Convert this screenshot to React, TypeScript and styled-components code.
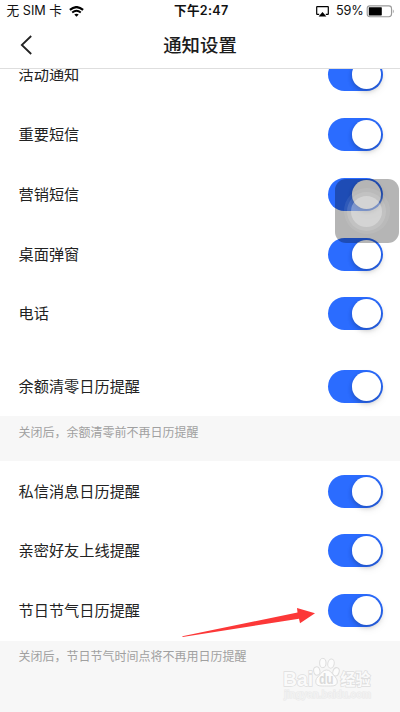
import React from "react";
import styled, { createGlobalStyle } from "styled-components";

const GlobalStyle = createGlobalStyle`
  * { box-sizing: border-box; }
  html, body { margin: 0; padding: 0; background: #fff; overflow: hidden; }
  body { font-family: Inter, "Noto Sans CJK SC", sans-serif; color: #222; }
`;

const Screen = styled.div`
  position: relative;
  display: flex;
  flex-direction: column;
  width: 400px;
  height: 712px;
  overflow: hidden;
  background: #fff;
`;

const StatusBar = styled.header`
  display: grid;
  grid-template-columns: 1fr auto 1fr;
  align-items: center;
  flex: none;
  height: 22px;
  padding: 0 5px 0 6.5px;
  font-size: 12.7px;
  line-height: 22px;
  color: #111;
  white-space: nowrap;
`;

const StatusGroup = styled.div<{ $end?: boolean }>`
  display: flex;
  align-items: center;
  justify-content: ${(p) => (p.$end ? "flex-end" : "flex-start")};
  gap: ${(p) => (p.$end ? "0" : "7px")};
  svg { flex: none; }
`;

const Clock = styled.div`
  padding-left: 1px;
  font-weight: 600;
  font-size: 12.6px;
  letter-spacing: 0.3px;
`;

const Battery = styled.span`
  margin: 0 2.5px 0 7px;
  letter-spacing: -0.2px;
`;

const NavBar = styled.nav`
  display: grid;
  grid-template-columns: 60px 1fr 60px;
  align-items: center;
  flex: none;
  height: 47px;
  border-bottom: 1px solid #dedede;
`;

const BackButton = styled.button`
  display: flex;
  padding: 0 0 0 20px;
  border: 0;
  background: none;
`;

const Title = styled.h1`
  margin: 0;
  padding-bottom: 2px;
  text-align: center;
  font: 500 18.4px/44px "Noto Sans CJK SC", sans-serif;
  color: #1c1c1c;
`;

const Content = styled.main`
  flex: 1;
  min-height: 0;
  overflow: hidden;
  background: #f7f7f7;
`;

const Section = styled.section<{ $scrolled?: boolean; $spaced?: boolean }>`
  margin-top: ${(p) => (p.$scrolled ? "-24.1px" : "0")};
  padding-top: ${(p) => (p.$spaced ? "12.6px" : "0")};
  background: #fff;
`;

const Row = styled.div`
  display: flex;
  align-items: center;
  justify-content: space-between;
  height: 59.8px;
  padding: 0 17px 0 18.5px;
`;

const Label = styled.span`
  padding-bottom: 3px;
  font: 400 15.2px/24px "Noto Sans CJK SC", sans-serif;
  color: #222;
`;

const Switch = styled.span`
  display: flex;
  align-items: center;
  justify-content: flex-end;
  width: 55px;
  height: 33px;
  padding-right: 2px;
  border-radius: 17px;
  background: #2b6cff;
`;

const Knob = styled.span`
  width: 29.4px;
  height: 29px;
  border-radius: 50%;
  background: #fff;
  box-shadow: 0 2px 5px rgba(0, 0, 0, 0.22), 2px 4px 9px rgba(0, 0, 0, 0.06);
`;

const Hint = styled.p`
  height: 45px;
  margin: 0;
  padding: 6.5px 18.5px;
  font: 400 12px/18px "Noto Sans CJK SC", sans-serif;
  color: #a0a0a0;
`;

const AssistiveTouch = styled.div`
  position: absolute;
  left: 334.5px;
  top: 179px;
  display: grid;
  place-items: center;
  width: 64.5px;
  height: 64px;
  border-radius: 11px;
  background: rgba(0, 0, 0, 0.29);
`;

const TouchRing = styled.span<{ $size: number; $alpha: number }>`
  display: grid;
  place-items: center;
  width: ${(p) => p.$size}px;
  height: ${(p) => p.$size}px;
  border-radius: 50%;
  background: rgba(255, 255, 255, ${(p) => p.$alpha});
`;

const Arrow = styled.svg`
  position: absolute;
  left: 180px;
  top: 604px;
`;

const Watermark = styled.svg`
  position: absolute;
  left: 280px;
  top: 654px;
`;

const WifiIcon = () => (
  <svg width="15" height="11" viewBox="0 0 15 11" fill="none" stroke="#000">
    <path d="M.9 3.9Q7.5-1.8 14.1 3.9" strokeWidth="2.1" />
    <path d="M3.2 6.5Q7.5 3 11.8 6.5" strokeWidth="1.9" />
    <path d="M5.3 8.5Q7.5 6.8 9.7 8.5L7.5 10.8Z" fill="#000" stroke="none" />
  </svg>
);

const AirplayIcon = () => (
  <svg width="13" height="11" viewBox="0 0 13 11">
    <path d="M3.2 8.4H1.1Q.7 8.4.7 8V1.1Q.7.7 1.1.7H11.9Q12.3.7 12.3 1.1V8Q12.3 8.4 11.9 8.4H9.8" fill="none" stroke="#000" strokeWidth="1.2" />
    <path d="M6.5 5.9 10.4 10.4H2.6Z" fill="#000" />
  </svg>
);

const BatteryIcon = () => (
  <svg width="29" height="13" viewBox="0 0 29 13">
    <rect x="1.2" y=".9" width="24.3" height="10.8" rx="2.6" fill="#fff" stroke="#999" strokeWidth="1.1" />
    <rect x="2.8" y="2.2" width="13" height="8.2" rx=".6" fill="#000" />
    <path d="M26.8 4.2Q28.7 6.3 26.8 8.4Z" fill="#999" />
  </svg>
);

const SwitchRow = ({ label }: { label: string }) => (
  <Row>
    <Label>{label}</Label>
    <Switch role="switch" aria-checked="true" aria-label={label}>
      <Knob />
    </Switch>
  </Row>
);

const BaiduMark = () => (
  <Watermark width="98" height="50" viewBox="0 0 98 50">
    <g fill="#fcfcfc" stroke="#dedede" strokeWidth="1">
      <ellipse cx="36.8" cy="17" rx="3.1" ry="4.2" transform="rotate(-12 36.8 17)" />
      <ellipse cx="42.8" cy="9" rx="3.2" ry="4.6" />
      <ellipse cx="51" cy="9.6" rx="3.2" ry="4.6" transform="rotate(10 51 9.6)" />
      <ellipse cx="56" cy="17.8" rx="3.1" ry="4.2" transform="rotate(18 56 17.8)" />
      <path d="M46.5 16C43 16 41.5 19 39.4 21.2C37 23.8 35.4 25 35.8 28.3C36.2 32.5 41 32 46.3 32C51.8 32 57 32.6 57.3 28C57.5 25 55.3 23 53.5 21C51.2 18.3 49.8 16 46.5 16Z" />
    </g>
    <g fontFamily='"Liberation Sans", "Noto Sans CJK SC", sans-serif' fontWeight="700" fill="#fafafa" stroke="#dedede" strokeWidth="1.5" paintOrder="stroke">
      <text x="3" y="31.5" fontSize="20" textLength="30" lengthAdjust="spacingAndGlyphs">Bai</text>
      <text x="39" y="30" fontSize="14" fill="#dadada" stroke="none" textLength="14.5" lengthAdjust="spacingAndGlyphs">du</text>
      <text x="60.5" y="31" fontSize="15.5" textLength="30" lengthAdjust="spacingAndGlyphs">经验</text>
      <text x="4" y="43.5" fontSize="10.2" fill="#f2f2f2" stroke="#e9e9e9" strokeWidth="1" textLength="87" lengthAdjust="spacingAndGlyphs">jingyan.baidu.com</text>
    </g>
  </Watermark>
);

export default function App() {
  return (
    <Screen>
      <GlobalStyle />
      <StatusBar>
        <StatusGroup>
          <span>无 SIM 卡</span>
          <WifiIcon />
        </StatusGroup>
        <Clock>下午2:47</Clock>
        <StatusGroup $end>
          <AirplayIcon />
          <Battery>59%</Battery>
          <BatteryIcon />
        </StatusGroup>
      </StatusBar>
      <NavBar>
        <BackButton aria-label="返回">
          <svg width="13" height="20" viewBox="0 0 13 20" fill="none" stroke="#222" strokeWidth="1.8">
            <path d="M11.2 1 1.8 10 11.2 19" />
          </svg>
        </BackButton>
        <Title>通知设置</Title>
      </NavBar>
      <Content>
        <Section $scrolled>
          <SwitchRow label="活动通知" />
          <SwitchRow label="重要短信" />
          <SwitchRow label="营销短信" />
          <SwitchRow label="桌面弹窗" />
          <SwitchRow label="电话" />
        </Section>
        <Section $spaced>
          <SwitchRow label="余额清零日历提醒" />
        </Section>
        <Hint>关闭后，余额清零前不再日历提醒</Hint>
        <Section>
          <SwitchRow label="私信消息日历提醒" />
          <SwitchRow label="亲密好友上线提醒" />
          <SwitchRow label="节日节气日历提醒" />
        </Section>
        <Hint>关闭后，节日节气时间点将不再用日历提醒</Hint>
      </Content>
      <AssistiveTouch>
        <TouchRing $size={46} $alpha={0.08}>
          <TouchRing $size={39} $alpha={0.12}>
            <TouchRing $size={31} $alpha={0.3} />
          </TouchRing>
        </TouchRing>
      </AssistiveTouch>
      <Arrow width="138" height="36" viewBox="0 0 138 36">
        <path d="M2.3 32.2 117.5 8.5 117 4 135 9.2 120 19.2 119 14.8 2.6 33Z" fill="#fc3838" />
      </Arrow>
      <BaiduMark />
    </Screen>
  );
}
